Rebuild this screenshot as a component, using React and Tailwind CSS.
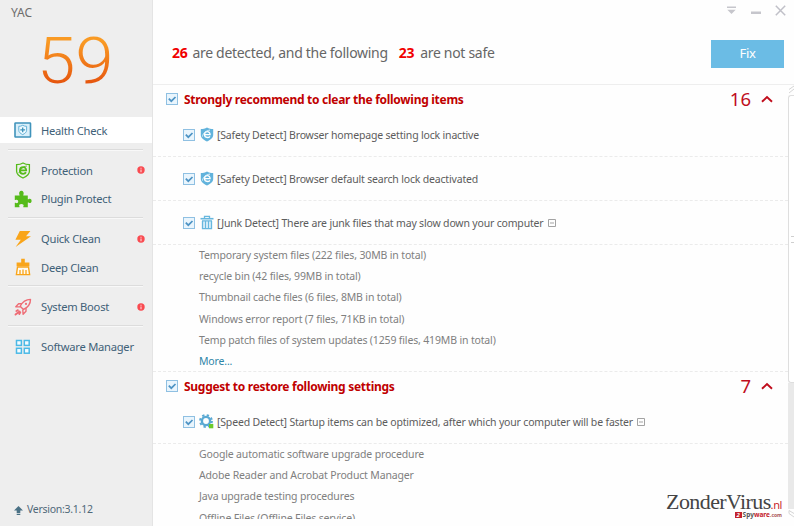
import React from "react";

// --- ICONS ---
const HealthIcon = () => (
  <svg width="18" height="16" viewBox="0 0 18 16" fill="none">
    <rect x="1" y="1" width="15.5" height="14" rx="0.6" fill="#d9effa" stroke="#3f93bb" strokeWidth="1.6" />
    <path d="M8.7 3.3c1.4.8 2.5 1 3.9 1v4c0 2-1.7 3.2-3.9 4.3-2.2-1.1-3.9-2.3-3.9-4.3v-4c1.4 0 2.5-.2 3.9-1z" fill="#eefaff" stroke="#57aad2" strokeWidth="0.9" />
    <path d="M8.7 5.4v4.8M6.3 7.8h4.8" stroke="#3f93bb" strokeWidth="1.3" />
  </svg>
);

const ShieldEIcon = () => (
  <svg width="16" height="17" viewBox="0 0 16 17" fill="none" stroke="#55bb1a">
    <path d="M8 1c2 1.2 4 1.6 6.4 1.6v6.6c0 3.2-3 5.2-6.4 6.8-3.4-1.6-6.4-3.6-6.4-6.8V2.6C4 2.6 6 2.2 8 1z" strokeWidth="1.3" />
    <path d="M4.9 8.4h6.3c0-2-1.3-3.3-3.1-3.3S4.9 6.5 4.9 8.5s1.4 3.3 3.2 3.3c1.3 0 2.3-.5 2.9-1.5" strokeWidth="1.8" />
    <path d="M4 11.2c.4-3 3.4-6.6 7.9-7.2" strokeWidth="0.9" />
  </svg>
);

const PuzzleIcon = () => (
  <svg width="18" height="18" viewBox="0 0 18 18" fill="#55bb1a">
    <path d="M.8 5.6h4.7c.3-.4 0-.8-.2-1.2C4.700 2.600 5.600.8 7.400.8s2.700 1.800 2.100 3.600c-.2.4-.5.800-.2 1.200h4.500v3.600c.4.300.800 0 1.100-.2 1.400-.7 2.700.3 2.700 1.900s-1.300 2.600-2.700 1.900c-.3-.2-.7-.5-1.100-.2v4.700H9.400c-.4-.4 0-.8.200-1.200.4-1.300-.7-2-2.200-2s-2.600.7-2.200 2c.2.400.6.800.2 1.200H.8v-4.400c.4-.4.800-.1 1.200.1 1.200.5 2.200-.4 2.200-1.600s-1-2.100-2.200-1.600c-.4.2-.8.500-1.200.1z" />
  </svg>
);

const BoltIcon = () => (
  <svg width="18" height="18" viewBox="0 0 18 18" fill="#f9a51a">
    <path d="M5.800 1H16.400l-4.400 5.200h5L1.600 17l5.200-7.200H1.400z" />
  </svg>
);

const BrushIcon = () => (
  <svg width="16" height="18" viewBox="0 0 16 18" fill="none">
    <path d="M6.200.8h3.600V4.600h4.600v3.600H1.600V4.600h4.600z" fill="#f9a51a" />
    <path d="M2.500 9L1.400 16.600h13.200L13.500 9z" fill="#fffaf0" stroke="#f9a51a" strokeWidth="1.400" />
    <path d="M5 12v4.500M8 11.500v5M11 12v4.500" stroke="#f9a51a" strokeWidth="1.300" />
  </svg>
);

const RocketIcon = () => (
  <svg width="18" height="18" viewBox="0 0 18 18" fill="none" stroke="#ee6c75" strokeWidth="1.400" strokeLinejoin="round" strokeLinecap="round">
    <path d="M16.500 1.400c-4.700 0-8 2.300-10.300 6.900l3.200 3.200c4.600-2.300 7.100-5.400 7.100-10.100z" />
    <path d="M7.500 5.800H4.600L1.800 8.700l4 .2M12 10.400v2.900l-2.900 2.900-.3-4" />
    <circle cx="12" cy="5.900" r="1.100" fill="#ee6c75" stroke="none" />
    <path d="M3.900 12.200l-1.500.8M5.500 13.400L1.500 16.600M6.300 14.200l-1 1.700" strokeWidth="1.900" />
  </svg>
);

const TilesIcon = () => (
  <svg width="16" height="16" viewBox="0 0 16 16" fill="#f4fbff" stroke="#4bb9e6" strokeWidth="1.500">
    <rect x="1.500" y="1.500" width="4.900" height="4.900" />
    <rect x="9.300" y="1.500" width="4.900" height="4.900" />
    <rect x="1.500" y="9.300" width="4.900" height="4.900" />
    <rect x="9.300" y="9.300" width="4.900" height="4.900" />
  </svg>
);

const SafetyIcon = () => (
  <svg width="14" height="15" viewBox="0 0 14 15" fill="none">
    <path d="M7 .5c2 1 4 1.500 6.200 1.500v6c0 3-3 5-6.200 6.500C3.800 13 .8 11 .8 8V2C3 2 5 1.500 7 .5z" fill="#62b3dc" />
    <path d="M4.600 7.600h5.500c0-1.800-1.200-2.900-2.800-2.900S4.500 5.900 4.500 7.600s1.300 2.900 2.900 2.900c1.200 0 2-.4 2.500-1.200" stroke="#fff" strokeWidth="1.300" />
    <path d="M2.500 9.500c.3-3 3.500-6 7.500-6.400" stroke="#e6f5fc" strokeWidth="1" />
  </svg>
);

const TrashIcon = () => (
  <svg width="14" height="15" viewBox="0 0 14 15" fill="none" stroke="#67b7de">
    <path d="M.5 3.700h13" strokeWidth="1.600" />
    <path d="M4.500 3.200V1.300h5v1.900" strokeWidth="1.300" />
    <path d="M2.500 6v7.700h9V6" fill="#d7eef9" strokeWidth="1.300" />
    <path d="M2 5.900h10M5.500 6.500v7M8.500 6.500v7" strokeWidth="1.100" />
  </svg>
);

const GearIcon = () => (
  <svg width="15" height="15" viewBox="0 0 15 15" fill="none">
    <circle cx="7" cy="7" r="4.100" stroke="#5aa9d3" strokeWidth="2.400" />
    <circle cx="7" cy="7" r="5.900" stroke="#5aa9d3" strokeWidth="2" strokeDasharray="2.320 2.320" />
    <path d="M10 10h4.300v4.300H10z" fill="#6ccb2c" />
  </svg>
);

const Chevron = () => (
  <svg width="12" height="8" viewBox="0 0 12 8" fill="none" stroke="#c00d1c" strokeWidth="1.900">
    <path d="M1 6.800L6 2l5 4.800" />
  </svg>
);

const Checkbox = () => (
  <svg className="shrink-0" width="12" height="12" viewBox="0 0 12 12" fill="none">
    <rect x="0.500" y="0.500" width="11" height="11" fill="#e9f5fd" stroke="#8fc0e2" />
    <path d="M2.800 5.600l2.500 2.600L9.500 4" stroke="#4d93c4" strokeWidth="1.700" />
  </svg>
);

const Collapse = () => (
  <svg className="ml-[4px]" width="8" height="8" viewBox="0 0 8 8" fill="none" stroke="#a3a3a3">
    <path d="M.5.500h7v7h-7zM2 4h4" />
  </svg>
);

const Alert = () => (
  <svg width="8" height="8" viewBox="0 0 8 8">
    <circle cx="4" cy="4" r="3.700" fill="#f94a50" />
    <path d="M3.500 1.800h1v1h-1zM3.500 3.400h1v2.800h-1z" fill="#ffe3e3" />
  </svg>
);

// --- SIDEBAR ---
function NavItem({ icon, label, alert, className = "" }) {
  return (
    <div className={`flex items-center ${className}`}>
      <span className="ml-[13px] flex w-[20px] justify-center">{icon}</span>
      <span className="mt-px ml-[8px] flex-1 text-[11.200px] leading-[18px] tracking-[-0.260px] whitespace-nowrap text-[#3f6178]">{label}</span>
      {alert && <span className="mr-[7px]"><Alert /></span>}
    </div>
  );
}

const Divider = () => <div className="mr-[9px] ml-[8px] h-[2px] shrink-0 border-t border-[#dcdcdc] bg-[#f8f8f8]" />;

function Sidebar() {
  return (
    <aside className="flex w-[153px] shrink-0 flex-col border-r border-[#e4e4e4] bg-[#eeeeee]">
      <div className="h-[27px] pt-[4px] pl-[11px] text-[12px] leading-[18px] text-[#6d6d6d]">YAC</div>
      <div className="h-[90px] pt-px pl-[37px]">
        <span className="inline-block origin-left scale-x-[1.08] bg-gradient-to-b from-[#f99a24] from-20% to-[#e4500c] to-85% bg-clip-text font-[Roboto] text-[64px] leading-[68px] font-light text-transparent">59</span>
      </div>
      <NavItem className="h-[26px] bg-white" icon={<HealthIcon />} label="Health Check" />
      <div className="h-[6px]" />
      <Divider />
      <div className="h-[5px]" />
      <NavItem className="h-[28px]" icon={<ShieldEIcon />} label="Protection" alert />
      <NavItem className="h-[29px]" icon={<PuzzleIcon />} label="Plugin Protect" />
      <div className="h-[4px]" />
      <Divider />
      <div className="h-[5px]" />
      <NavItem className="h-[29px]" icon={<BoltIcon />} label="Quick Clean" alert />
      <NavItem className="h-[28px]" icon={<BrushIcon />} label="Deep Clean" />
      <div className="h-[4px]" />
      <Divider />
      <div className="h-[5px]" />
      <NavItem className="h-[29px]" icon={<RocketIcon />} label="System Boost" alert />
      <div className="h-[4px]" />
      <Divider />
      <div className="h-[5px]" />
      <NavItem className="h-[29px]" icon={<TilesIcon />} label="Software Manager" />
      <div className="mt-auto mb-[7px] flex h-[18px] items-center pl-[14px] text-[10.500px] tracking-[-0.270px] text-[#4f6879]">
        <svg width="9" height="9" viewBox="0 0 9 9" fill="#4a7185">
          <path d="M4.500 0L9 4.500H6.300V7H2.700V4.500H0zM2.700 7.700h3.600V9H2.700z" />
        </svg>
        <span className="ml-[4px]">Version:3.1.12</span>
      </div>
    </aside>
  );
}

// --- MAIN LIST ---
function SectionHeader({ title, count }) {
  return (
    <div className="flex h-[28px] items-center pr-[15px] pl-[13px]">
      <Checkbox />
      <span className="mt-[2px] ml-[6px] text-[12px] font-bold tracking-[-0.280px] text-[#c00000]">{title}</span>
      <span className="ml-auto text-[18.500px] leading-[28px] text-[#c00d1c]">{count}</span>
      <span className="ml-[10px]"><Chevron /></span>
    </div>
  );
}

function Item({ icon, text, collapsible }) {
  return (
    <div className="flex h-[44px] items-center border-b border-dashed border-[#ebebeb] pl-[30px]">
      <Checkbox />
      <span className="ml-[4px] flex w-[15px] justify-center">{icon}</span>
      <span className="mt-[2px] ml-[3px] text-[10.500px] tracking-[-0.175px] text-[#5c5c5c]">{text}</span>
      {collapsible && <Collapse />}
    </div>
  );
}

function SubList({ rows, more }) {
  return (
    <div className="pl-[46px] text-[10.500px] leading-[21.200px] tracking-[-0.155px] text-[#808080]">
      {rows.map((row) => (
        <div key={row}>{row}</div>
      ))}
      {more && <div className="text-[#2f86a8]">More...</div>}
    </div>
  );
}

const junkRows = [
  "Temporary system files (222 files, 30MB in total)",
  "recycle bin (42 files, 99MB in total)",
  "Thumbnail cache files (6 files, 8MB in total)",
  "Windows error report (7 files, 71KB in total)",
  "Temp patch files of system updates (1259 files, 419MB in total)",
];

const startupRows = [
  "Google automatic software upgrade procedure",
  "Adobe Reader and Acrobat Product Manager",
  "Java upgrade testing procedures",
  "Offline Files (Offline Files service)",
];

function Scrollbar() {
  return (
    <div className="flex w-[6px] shrink-0 flex-col">
      <svg width="6" height="10" viewBox="0 0 6 10" fill="none" stroke="#d5d5d5">
        <path d="M1 4.500L6 1M1 8L6 4" />
      </svg>
      <div className="flex h-[288px] items-center justify-end rounded-l-[3px] border border-r-0 border-[#dedede] bg-white">
        <span className="h-[7px] w-[3px] border-y border-[#cfcfcf]" />
      </div>
      <div className="h-[126px] bg-[#e9e9e9]" />
      <svg width="6" height="9" viewBox="0 0 6 9" fill="none" stroke="#d5d5d5">
        <path d="M1 1.500l5 3M1 1.500v3l5 3.500" />
      </svg>
    </div>
  );
}

function App() {
  return (
    <div className="relative flex h-[526px] w-[794px] overflow-hidden bg-[#fefefe]" style={{ fontFamily: "'Noto Sans', 'Open Sans', sans-serif" }}>
      <Sidebar />
      <main className="flex min-w-0 flex-1 flex-col">
        <header className="flex h-[85px] shrink-0 flex-col border-b border-[#eeeeee]">
          <div className="flex h-[22px] items-center justify-end gap-[14px] pr-[8px]">
            <svg width="10" height="9" viewBox="0 0 10 9" fill="#c6c6cc">
              <path d="M0 .5h9v1.500H0zM.3 3.800h8.400L4.500 8z" />
            </svg>
            <svg width="10" height="9" viewBox="0 0 10 9" fill="#c6c6cc">
              <path d="M0 5.500h10V8H0z" />
            </svg>
            <svg width="11" height="11" viewBox="0 0 11 11" stroke="#c0c0c8" strokeWidth="1.500">
              <path d="M.8.800l9.400 9.400M10.200.800L.8 10.200" />
            </svg>
          </div>
          <div className="flex h-[63px] items-center pr-[10px] pl-[19px] text-[14px] tracking-[-0.300px] whitespace-nowrap text-[#666]">
            <span className="font-bold text-[#f10000]">26</span>
            <span className="ml-[5px]">are detected, and the following</span>
            <span className="ml-[11px] font-bold text-[#f10000]">23</span>
            <span className="ml-[6px]">are not safe</span>
            <button className="mt-[2px] ml-auto h-[28px] w-[73px] bg-[#6bbce5] text-[13px] text-white">Fix</button>
          </div>
        </header>
        <div className="flex h-[434px]">
          <div className="min-w-0 flex-1 overflow-hidden whitespace-nowrap">
            <SectionHeader title="Strongly recommend to clear the following items" count={16} />
            <Item icon={<SafetyIcon />} text="[Safety Detect] Browser homepage setting lock inactive" />
            <Item icon={<SafetyIcon />} text="[Safety Detect] Browser default search lock deactivated" />
            <Item icon={<TrashIcon />} text="[Junk Detect] There are junk files that may slow down your computer" collapsible />
            <div className="h-[127px] border-b border-dashed border-[#ebebeb]">
              <SubList rows={junkRows} more />
            </div>
            <SectionHeader title="Suggest to restore following settings" count={7} />
            <Item icon={<GearIcon />} text="[Speed Detect] Startup items can be optimized, after which your computer will be faster" collapsible />
            <SubList rows={startupRows} />
          </div>
          <Scrollbar />
        </div>
      </main>

      {/* watermark over the list */}
      <div className="absolute right-[12px] bottom-[7px] flex flex-col items-end">
        <div className="flex h-[18px] items-baseline leading-[18px]">
          <span className="font-['Liberation_Serif'] text-[22px] tracking-[-0.600px] text-[#444]">ZonderVirus</span>
          <span className="text-[11px] tracking-[-0.400px] text-[#c81e2b]">.nl</span>
        </div>
        <div className="flex h-[8px] items-center text-[6.500px] leading-[8px] font-bold">
          <span className="mr-px flex h-[6px] w-[7px] items-center justify-center bg-[#c4222c] text-[6px] leading-[6px] text-white italic">2</span>
          <span className="text-[#555]">Spy</span>
          <span className="text-[#c4222c]">ware</span>
          <span className="text-[5px] text-[#a55]">.com</span>
        </div>
      </div>
    </div>
  );
}

export default App;
